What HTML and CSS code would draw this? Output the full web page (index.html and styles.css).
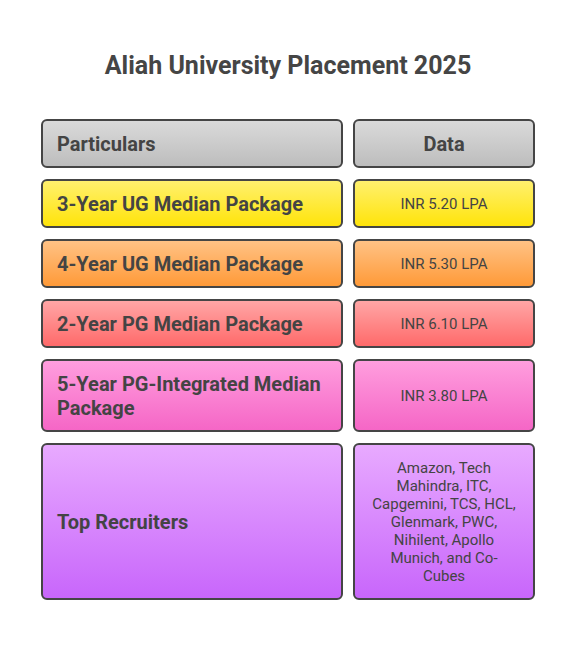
FILE: index.html
```html
<!DOCTYPE html>
<html>
<head>
<meta charset="utf-8">
<link rel="stylesheet" href="styles.css">
</head>
<body>
<div class="page">
  <h1 class="title">Aliah University Placement 2025</h1>
  <div class="table">
    <div class="cell label gray">Particulars</div>
    <div class="cell value head gray">Data</div>

    <div class="cell label yellow">3-Year UG Median Package</div>
    <div class="cell value yellow">INR 5.20 LPA</div>

    <div class="cell label orange">4-Year UG Median Package</div>
    <div class="cell value orange">INR 5.30 LPA</div>

    <div class="cell label red">2-Year PG Median Package</div>
    <div class="cell value red">INR 6.10 LPA</div>

    <div class="cell label pink">5-Year PG-Integrated Median Package</div>
    <div class="cell value pink">INR 3.80 LPA</div>

    <div class="cell label purple">Top Recruiters</div>
    <div class="cell value purple list">Amazon, Tech Mahindra, ITC, Capgemini, TCS, HCL, Glenmark, PWC, Nihilent, Apollo Munich, and Co-Cubes</div>
  </div>
</div>
</body>
</html>
```

FILE: styles.css
```css
html, body {
  margin: 0;
  padding: 0;
  background: #ffffff;
}

.page {
  width: 576px;
  height: 660px;
  font-family: Roboto, "Liberation Sans", sans-serif;
  color: #444444;
  padding-top: 50px;
  box-sizing: border-box;
}

.title {
  margin: 0;
  text-align: center;
  font-size: 25px;
  line-height: 32px;
  font-weight: 700;
  color: #454545;
}

.table {
  display: grid;
  grid-template-columns: 302px 182px;
  grid-template-rows: 49px 49px 49px 49px 73px 157px;
  column-gap: 10px;
  row-gap: 11px;
  margin: 37px 0 0 41px;
}

.cell {
  box-sizing: border-box;
  border: 2px solid #454545;
  border-radius: 6px;
  display: flex;
  align-items: center;
}

.label {
  font-size: 20px;
  font-weight: 700;
  line-height: 24px;
  padding: 0 12px 0 14px;
}

.value {
  justify-content: center;
  text-align: center;
  font-size: 15px;
  line-height: 18px;
  padding: 0 8px;
}

.value.head {
  font-size: 20px;
  font-weight: 700;
}

.list {
  padding: 0 16px;
}

.gray   { background: linear-gradient(#dadada, #bdbdbd); }
.yellow { background: linear-gradient(#fff06e, #ffe40a); }
.orange { background: linear-gradient(#ffc285, #ff9a38); }
.red    { background: linear-gradient(#ffa6a6, #ff6a6a); }
.pink   { background: linear-gradient(#ff9ede, #f566c6); }
.purple { background: linear-gradient(#e8aaff, #c866fb); }
```
